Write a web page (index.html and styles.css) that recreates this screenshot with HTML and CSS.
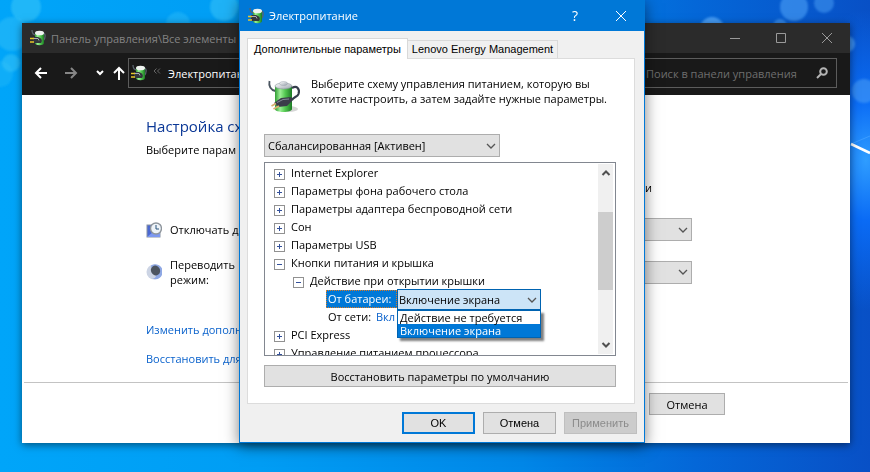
FILE: index.html
```
<!DOCTYPE html>
<html lang="ru">
<head>
<meta charset="utf-8">
<title>Электропитание</title>
<link rel="stylesheet" href="styles.css">
</head>
<body>
<svg class="defs" aria-hidden="true">
  <defs>
    <linearGradient id="cell" x1="0" x2="1" y1="0" y2="0">
      <stop offset="0" stop-color="#2f9c33"/><stop offset=".3" stop-color="#9df096"/><stop offset=".6" stop-color="#52c850"/><stop offset="1" stop-color="#1c7a24"/>
    </linearGradient>
    <linearGradient id="cap" x1="0" x2="1" y1="0" y2="1">
      <stop offset="0" stop-color="#ffffff"/><stop offset="1" stop-color="#9aa3ad"/>
    </linearGradient>
    <symbol id="battery" viewBox="0 0 34 34">
      <ellipse cx="22" cy="29" rx="9" ry="3" fill="#000" opacity=".16"/>
      <path d="M2.500 1c-1 5 1 9 6 10" fill="none" stroke="#4a5560" stroke-width="1.800"/>
      <path d="M8 6v23c0 4 17 4 17 0V6z" fill="url(#cell)"/>
      <ellipse cx="16.500" cy="6" rx="8.500" ry="3" fill="url(#cap)" stroke="#8b949c" stroke-width=".6"/>
      <ellipse cx="16.500" cy="3.500" rx="4" ry="2" fill="url(#cap)" stroke="#9aa3ad" stroke-width=".5"/>
      <path d="M25 8c5-3 8 1 6.500 6-1 3-5 3-6.500 6" fill="none" stroke="#353d4c" stroke-width="2.200"/>
      <path d="M7 23l7-5 10-1 2 3-6 6-9 1z" fill="#3b3d4a"/>
      <path d="M10 22.500l6-3 6-.5" fill="none" stroke="#858b98" stroke-width="1"/>
      <path d="M9 23.500l-4.500 2.500M12 26l-5.500 3" stroke="#d8b070" stroke-width="1.800"/>
    </symbol>
    <symbol id="plug" viewBox="0 0 16 16">
      <path d="M2 0c0 3 1 5 4 5M12 3c4-1 4 5 1 8" fill="none" stroke="#59636c" stroke-width="1.300"/>
      <path d="M5 3v10c0 3 9 3 9 0V3z" fill="url(#cell)"/>
      <ellipse cx="9.500" cy="3" rx="4.500" ry="2.300" fill="#eef3f0"/>
      <path d="M3 7h5c3 1 5 3 3 6H3z" fill="#33373c"/>
      <path d="M4 8.500h4l1 2" fill="none" stroke="#a6adb3"/>
      <path d="M0 8.500h4M0 12h4" stroke="#e8c62a" stroke-width="1.300"/>
    </symbol>
    <symbol id="chevron" viewBox="0 0 10 6"><path d="M1 1l4 4 4-4" fill="none" stroke="currentColor" stroke-width="1.300"/></symbol>
    <symbol id="arrow" viewBox="0 0 10 6"><path d="M1.500 1L5 4.500 8.500 1" fill="none" stroke="currentColor" stroke-width="2"/></symbol>
  </defs>
</svg>

<div class="desktop">
  <svg class="wallpaper" viewBox="0 0 870 472" preserveAspectRatio="none" aria-hidden="true">
    <defs>
      <linearGradient id="sky" x1="0" x2="1" y1="0" y2="0">
        <stop offset="0" stop-color="#00a5f9"/><stop offset=".3" stop-color="#009df4"/><stop offset=".6" stop-color="#0087e8"/><stop offset=".8" stop-color="#0467d8"/><stop offset="1" stop-color="#0850c6"/>
      </linearGradient>
      <radialGradient id="glow"><stop offset="0" stop-color="#2f9dff"/><stop offset=".4" stop-color="#0a6bf5"/><stop offset="1" stop-color="#0a6bf5" stop-opacity="0"/></radialGradient>
      <filter id="soft"><feGaussianBlur stdDeviation="1.200"/></filter>
    </defs>
    <rect width="870" height="472" fill="url(#sky)"/>
    <ellipse cx="866" cy="160" rx="90" ry="150" fill="url(#glow)"/>
    <g filter="url(#soft)" fill="#3cc6f8">
      <circle cx="26" cy="7" r="15" opacity=".55"/>
      <circle cx="12" cy="34" r="17" opacity=".4"/>
      <circle cx="11" cy="63" r="9" opacity=".5"/>
      <circle cx="0" cy="74" r="13" opacity=".25"/>
      <circle cx="178" cy="24" r="12" opacity=".35"/>
      <circle cx="224" cy="7" r="14" opacity=".5"/>
    </g>
    <g filter="url(#soft)" fill="#4ba0f6">
      <circle cx="712" cy="29" r="12" opacity=".9"/>
      <circle cx="794" cy="7" r="14" opacity=".6"/>
      <circle cx="824" cy="3" r="10" opacity=".5"/>
      <circle cx="780" cy="26" r="7" opacity=".6"/>
      <circle cx="847" cy="44" r="8" opacity=".7"/>
      <circle cx="864" cy="91" r="12" opacity=".55"/>
    </g>
    <path d="M851 144l19-8" stroke="#3c9cff" stroke-width="1"/>
    <path d="M851 144l19 9" stroke="#fff" stroke-width="2.500"/>
  </svg>

  <main class="panel">
    <header class="panel-title">
      <svg class="icon16"><use href="#plug"/></svg>
      <span class="panel-path">Панель управления\Все элементы</span>
      <button class="caption" aria-label="Свернуть"><svg viewBox="0 0 12 12"><path d="M1 6.500h10"/></svg></button>
      <button class="caption" aria-label="Развернуть"><svg viewBox="0 0 12 12"><path d="M1.500 1.500h9v9h-9z"/></svg></button>
      <button class="caption" aria-label="Закрыть"><svg viewBox="0 0 12 12"><path d="M1 1l10 10M11 1L1 11"/></svg></button>
    </header>
    <nav class="panel-nav">
      <button class="nav-btn" aria-label="Назад"><svg viewBox="0 0 14 14"><path d="M13 7H2M7 2L2 7l5 5"/></svg></button>
      <button class="nav-btn dim" aria-label="Вперед"><svg viewBox="0 0 14 14"><path d="M1 7h11M7 2l5 5-5 5"/></svg></button>
      <button class="nav-btn small" aria-label="Журнал"><svg viewBox="0 0 14 14"><path d="M4 5l3 3 3-3"/></svg></button>
      <button class="nav-btn small" aria-label="Вверх"><svg viewBox="0 0 14 14"><path d="M7 14V2M2 7l5-5 5 5"/></svg></button>
      <div class="address">
        <svg class="icon16"><use href="#plug"/></svg>
        <svg class="crumbs" viewBox="0 0 8 6"><path d="M3.500 .5L1 3l2.500 2.500M7 .5L4.500 3 7 5.500"/></svg>
        <span>Электропитан</span>
      </div>
      <div class="search">
        <input type="search" aria-label="Поиск" placeholder="Поиск в панели управления">
        <svg viewBox="0 0 12 12"><circle cx="7.500" cy="4.500" r="3.300"/><path d="M5 7L1 11"/></svg>
      </div>
    </nav>
    <section class="plan">
      <h1>Настройка сх</h1>
      <p class="intro">Выберите парам</p>
      <div class="plan-grid">
        <span class="column-head">и</span>
        <svg class="icon16" viewBox="0 0 16 16"><rect x="1" y="3" width="13" height="12" fill="#4a68d2" stroke="#8a94a4"/><path d="M1 15l6-5h7v5z" fill="#7d98f0"/><circle cx="10" cy="6.500" r="5.500" fill="#eef3f8" stroke="#8e959c" stroke-width="1.400"/><path d="M10 3v4h3" fill="none" stroke="#27537a"/></svg>
        <label for="display-off">Отключать д</label>
        <span class="combo"><select id="display-off"><option></option></select><svg><use href="#chevron"/></svg></span>
        <svg class="icon16" viewBox="0 0 16 16"><circle cx="8" cy="8" r="7.500" fill="#ccd4e4"/><path d="M5 1.500a7.500 7.500 0 1 1 1 13c4 0 5-3 3-6C7 6 5 4 5 1.500z" fill="#8fa8e4"/><ellipse cx="9.500" cy="6.500" rx="4.500" ry="5" transform="rotate(-30 9.500 6.500)" fill="#4c5460"/></svg>
        <label for="sleep-after">Переводить<br>режим:</label>
        <span class="combo"><select id="sleep-after"><option></option></select><svg><use href="#chevron"/></svg></span>
      </div>
      <a href="#">Изменить дополн</a>
      <a href="#">Восстановить для</a>
    </section>
    <footer class="panel-foot"><button class="push">Отмена</button></footer>
  </main>

  <div class="dialog" role="dialog" aria-labelledby="dialog-title">
    <header class="dialog-title">
      <svg class="icon16"><use href="#plug"/></svg>
      <h2 id="dialog-title">Электропитание</h2>
      <button class="caption help" aria-label="Справка">?</button>
      <button class="caption" aria-label="Закрыть"><svg viewBox="0 0 12 12"><path d="M1 1l10 10M11 1L1 11"/></svg></button>
    </header>
    <div class="dialog-body">
      <div class="tabs" role="tablist">
        <button class="tab active" role="tab" aria-selected="true">Дополнительные параметры</button>
        <button class="tab" role="tab" aria-selected="false">Lenovo Energy Management</button>
      </div>
      <div class="sheet" role="tabpanel">
        <div class="hint">
          <svg class="icon34"><use href="#battery"/></svg>
          <p>Выберите схему управления питанием, которую вы хотите настроить, а затем задайте нужные параметры.</p>
        </div>
        <span class="combo scheme"><select aria-label="Схема управления питанием"><option>Сбалансированная [Активен]</option></select><svg><use href="#chevron"/></svg></span>
        <div class="listing">
          <ul class="tree">
            <li><span class="node plus">Internet Explorer</span></li>
            <li><span class="node plus">Параметры фона рабочего стола</span></li>
            <li><span class="node plus">Параметры адаптера беспроводной сети</span></li>
            <li><span class="node plus">Сон</span></li>
            <li><span class="node plus">Параметры USB</span></li>
            <li><span class="node">Кнопки питания и крышка</span>
              <ul>
                <li><span class="node">Действие при открытии крышки</span>
                  <ul class="values">
                    <li><label class="chosen" for="lid">От батареи:</label></li>
                    <li>От сети: <a href="#">Вкл</a></li>
                  </ul>
                </li>
              </ul>
            </li>
            <li><span class="node plus">PCI Express</span></li>
            <li><span class="node plus">Управление питанием процессора</span></li>
          </ul>
          <div class="scrollbar">
            <svg class="up"><use href="#arrow"/></svg>
            <span class="thumb"></span>
            <svg><use href="#arrow"/></svg>
          </div>
          <div class="popup">
            <span class="combo open"><select id="lid"><option>Включение экрана</option></select><svg><use href="#chevron"/></svg></span>
            <ul class="options" role="listbox">
              <li role="option">Действие не требуется</li>
              <li role="option" aria-selected="true">Включение экрана</li>
            </ul>
          </div>
        </div>
        <button class="push restore">Восстановить параметры по умолчанию</button>
      </div>
      <div class="actions">
        <button class="push primary">OK</button>
        <button class="push">Отмена</button>
        <button class="push" disabled>Применить</button>
      </div>
    </div>
  </div>
</div>
</body>
</html>
```
FILE: styles.css
```
* { box-sizing: border-box; }
body { margin: 0; font: 11px/15px "Open Sans", "Noto Sans", sans-serif; color: #000; }
button, input, select { font: inherit; color: inherit; margin: 0; }
h1, h2, p, ul { margin: 0; padding: 0; font-weight: normal; }
ul { list-style: none; }
a { color: #0a62cc; text-decoration: none; }
.defs { position: absolute; width: 0; height: 0; }
.icon16 { width: 16px; height: 16px; flex: none; }
.icon34 { width: 34px; height: 34px; flex: none; }

.desktop { position: relative; height: 100vh; min-height: 472px; overflow: hidden; background: #0087e8; }
.wallpaper { position: absolute; inset: 0; width: 100%; height: 100%; }

.caption { width: 46px; height: 30px; padding: 0; border: 0; background: none; display: grid; place-items: center; }
.caption svg { width: 12px; height: 12px; fill: none; stroke: currentColor; }

/* Control panel window */
.panel { position: absolute; inset: 23px 20px 29px 22px; display: flex; flex-direction: column; background: #fff; box-shadow: 0 2px 8px rgba(0, 0, 0, .5); }
.panel-title { display: flex; flex: none; align-items: center; height: 30px; padding-left: 8px; background: #2b2b2b; color: #9a9a9a; }
.panel-path { flex: 1; padding-left: 5px; color: #838383; white-space: nowrap; }
.panel-nav { display: flex; flex: none; align-items: center; height: 42px; padding: 0 13px 2px 8px; background: #191919; color: #fff; }
.nav-btn { flex: none; width: 22px; height: 22px; margin-right: 8px; padding: 0; border: 0; background: none; display: grid; place-items: center; }
.nav-btn.small { width: 19px; margin-right: 0; }
.nav-btn svg { width: 14px; height: 14px; fill: none; stroke: currentColor; stroke-width: 2; }
.nav-btn.dim { color: #868686; }
.address, .search { display: flex; align-items: center; height: 30px; border: 1px solid #5c5c5c; }
.address { width: 300px; padding-left: 2px; }
.address span { padding-left: 7px; }
.crumbs { width: 8px; height: 6px; margin: 0 0 4px 6px; fill: none; stroke: #666; }
.search { flex: 1; margin-left: 80px; padding: 0 8px; color: #b4b4b4; }
.search input { flex: 1; min-width: 0; padding: 0 0 0 129px; border: 0; background: none; outline: 0; }
.search input::placeholder { color: #6e6e6e; opacity: 1; }
.search svg { width: 12px; height: 12px; fill: none; stroke: currentColor; stroke-width: 2; }

.plan { flex: 1; padding: 20px 0 0 124px; }
.plan h1 { font-size: 15px; line-height: 22px; color: #0a3796; }
.intro { padding-top: 5px; }
.plan-grid { display: grid; grid-template-columns: 24px 1fr 132px; row-gap: 16px; align-items: center; max-width: 546px; padding: 23px 0 35px; }
.column-head { grid-column: 3; padding: 0 0 7px 85px; }
.plan a { display: block; margin-bottom: 14px; }
.panel-foot { flex: none; height: 61px; margin: 0 2px; padding: 10px 123px 0 0; border-top: 1px solid #c3c3c3; display: flex; justify-content: flex-end; }
.panel-foot .push { width: 76px; }

/* Shared controls */
.push { width: 73px; height: 22px; padding: 0; border: 1px solid #adadad; background: #e1e1e1; }
.push.primary { border: 2px solid #0078d7; }
.push:disabled { border-color: #bfbfbf; background: #ccc; color: #8b8b8b; }
.combo { display: grid; align-items: center; height: 23px; }
.combo > * { grid-area: 1 / 1; }
.combo select { width: 100%; height: 100%; padding: 0 3px; border: 1px solid #adadad; border-radius: 0; background: #e1e1e1; appearance: none; }
.combo svg { width: 10px; height: 6px; margin-right: 4px; justify-self: end; color: #555; pointer-events: none; }

/* Power options dialog */
.dialog { position: absolute; top: 0; left: 239px; width: 406px; border: 1px solid #0078d7; border-top: 0; background: #f0f0f0; box-shadow: 0 3px 14px rgba(0, 0, 0, .5); }
.dialog-title { display: flex; align-items: center; height: 31px; padding-left: 8px; background: #0078d7; color: #fff; }
.dialog-title h2 { flex: 1; padding-left: 5px; font-size: 11px; }
.help { font-size: 14px; }
.dialog-body { padding: 7px 7px 8px; }
.tabs { display: flex; align-items: flex-end; }
.tab { height: 18px; padding: 0 4px; border: 1px solid #d9d9d9; border-width: 1px 1px 0 0; background: #f0f0f0; font-family: "Liberation Sans", sans-serif; white-space: nowrap; }
.tab.active { position: relative; height: 21px; margin-bottom: -1px; padding: 0 6px; border-left-width: 1px; background: #fff; }
.sheet { margin-right: 2px; padding: 21px 18px 16px 16px; border: 1px solid #dcdcdc; background: #fff; }
.hint { display: flex; gap: 10px; padding-left: 3px; }
.hint p { margin-top: -4px; }
.scheme { width: 236px; margin-top: 20px; }
.listing { position: relative; display: flex; height: 194px; margin-top: 5px; border: 1px solid #828790; }
.tree { flex: 1; min-width: 0; padding: 1px 0 0 9px; overflow: hidden; line-height: 18px; white-space: nowrap; }
.tree ul { padding-left: 19px; }
.tree .values { padding-left: 33px; }
.node { display: flex; align-items: center; gap: 6px; height: 18px; }
.node::before { content: ""; width: 9px; height: 9px; margin-top: 2px; border: 1px solid #919191; background: linear-gradient(#34519b, #34519b) center / 5px 1px no-repeat, #fff; }
.node.plus::before { background: linear-gradient(#34519b, #34519b) center / 5px 1px no-repeat, linear-gradient(#34519b, #34519b) center / 1px 5px no-repeat, #fff; }
.values li { height: 18px; padding-left: 2px; }
.values a { margin-left: 2px; }
.chosen { display: inline-block; margin-left: -2px; padding: 0 6px 0 2px; background: #0078d7; color: #fff; outline: 1px dotted #e07a1e; outline-offset: -1px; }
.scrollbar { display: flex; flex-direction: column; align-items: center; width: 15px; margin: 1px 2px 1px 0; padding: 6px 0; background: #f0f0f0; }
.scrollbar svg { width: 10px; height: 6px; color: #505050; }
.scrollbar .up { transform: scaleY(-1); }
.thumb { width: 15px; height: 78px; margin: 36px 0 auto; background: #cdcdcd; }
.popup { position: absolute; top: 126px; left: 132px; width: 144px; }
.combo.open { height: 21px; }
.combo.open select { padding: 0 1px; border-color: #0063b1; background: #cce4f7; }
.options { border: 1px solid #0063b1; background: #fff; line-height: 13px; box-shadow: 3px 3px 2px rgba(0, 0, 0, .5); }
.options li { padding-left: 2px; }
.options [aria-selected] { background: #0078d7; color: #fff; }
.restore { display: block; width: 100%; margin-top: 9px; }
.actions { display: flex; justify-content: flex-end; gap: 8px; margin-top: 8px; }
.actions .push { font-family: "Liberation Sans", sans-serif; }
```
